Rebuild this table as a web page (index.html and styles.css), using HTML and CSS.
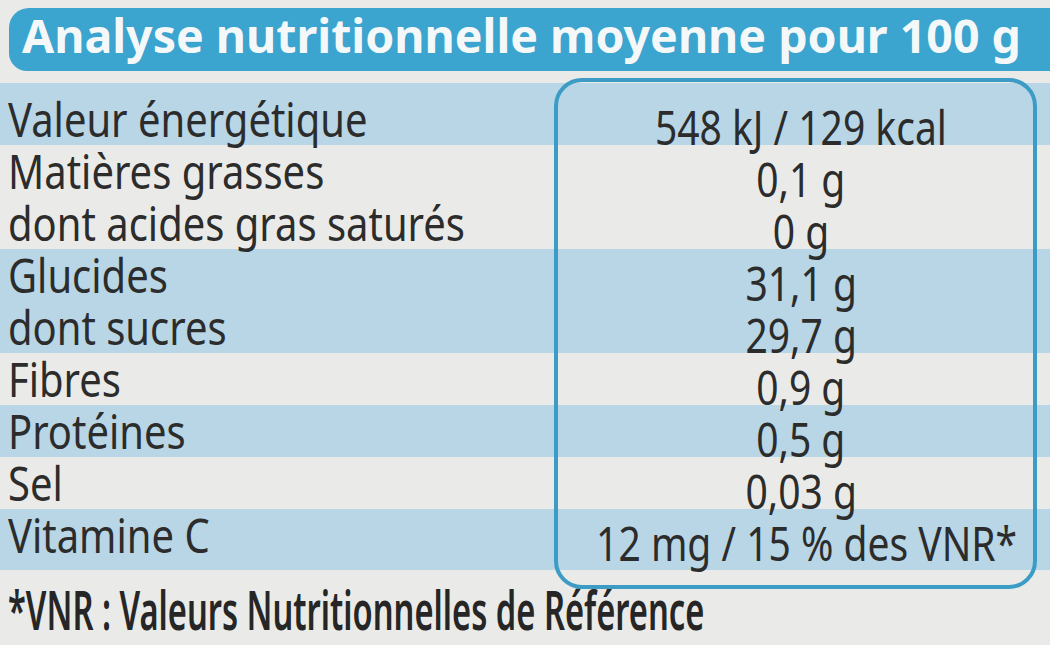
FILE: index.html
```html
<!DOCTYPE html>
<html lang="fr">
<head>
<meta charset="utf-8">
<title>Analyse nutritionnelle</title>
<link rel="stylesheet" href="styles.css">
</head>
<body>
<main class="label">
  <div class="banner">
    <h1 class="banner-title">Analyse nutritionnelle moyenne pour 100 g</h1>
  </div>
  <section class="table">
    <div class="rows">
      <div class="row row-blue row-first"><span class="name"><span class="txt">Valeur énergétique</span></span><span class="value"><span class="txt">548 kJ / 129 kcal</span></span></div>
      <div class="row"><span class="name"><span class="txt">Matières grasses</span></span><span class="value"><span class="txt">0,1 g</span></span></div>
      <div class="row"><span class="name"><span class="txt">dont acides gras saturés</span></span><span class="value"><span class="txt">0 g</span></span></div>
      <div class="row row-blue"><span class="name"><span class="txt">Glucides</span></span><span class="value"><span class="txt">31,1 g</span></span></div>
      <div class="row row-blue"><span class="name"><span class="txt">dont sucres</span></span><span class="value"><span class="txt">29,7 g</span></span></div>
      <div class="row"><span class="name"><span class="txt">Fibres</span></span><span class="value"><span class="txt">0,9 g</span></span></div>
      <div class="row row-blue"><span class="name"><span class="txt">Protéines</span></span><span class="value"><span class="txt">0,5 g</span></span></div>
      <div class="row"><span class="name"><span class="txt">Sel</span></span><span class="value"><span class="txt">0,03 g</span></span></div>
      <div class="row row-blue row-last"><span class="name"><span class="txt">Vitamine C</span></span><span class="value value-wide"><span class="txt">12 mg / 15 % des VNR*</span></span></div>
    </div>
    <div class="value-box"></div>
  </section>
  <p class="note"><span class="note-txt">*VNR : Valeurs Nutritionnelles de Référence</span></p>
</main>
</body>
</html>
```
FILE: styles.css
```css
html, body {
  margin: 0;
  padding: 0;
}
body {
  width: 1050px;
  height: 645px;
  overflow: hidden;
  background: #eaebe8;
  color: #2c2c2c;
  font-family: "Noto Sans", "Open Sans", "Liberation Sans", sans-serif;
}
.label {
  display: flex;
  flex-direction: column;
  width: 1050px;
}
.banner {
  margin: 8px 0 0 9px;
  height: 63px;
  background: #3ba4cf;
  border-radius: 20px 0 0 18px;
  padding: 0 0 0 13px;
  box-sizing: border-box;
}
.banner-title {
  margin: 0;
  font-size: 46.5px;
  line-height: 46px;
  padding-top: 4px;
  font-weight: 700;
  color: #f5f8f9;
  white-space: nowrap;
}
.table {
  display: grid;
  grid-template-columns: 1fr;
}
.rows, .value-box {
  grid-area: 1 / 1;
}
.rows {
  margin-top: 12px;
  display: flex;
  flex-direction: column;
  align-self: start;
}
.row {
  display: flex;
  height: 52px;
  font-size: 47px;
  line-height: 52px;
  white-space: nowrap;
}
.row-blue {
  background: #b8d6e6;
}
.row-first {
  height: 62px;
  padding-top: 10px;
  box-sizing: border-box;
}
.row-last {
  height: 61px;
}
.name {
  width: 553px;
  padding-left: 8px;
  box-sizing: border-box;
}
.name .txt {
  display: inline-block;
  transform: scaleX(0.85);
  transform-origin: left center;
}
.value {
  width: 484px;
  padding: 8px 0 0 12px;
  box-sizing: border-box;
  text-align: center;
}
.value-wide {
  padding-left: 0;
}
.value .txt {
  display: inline-block;
  transform: scaleX(0.83);
  transform-origin: center center;
}
.value-box {
  align-self: start;
  margin: 7px 0 0 554px;
  width: 483px;
  height: 511px;
  border: 4px solid #3c9cc6;
  border-radius: 28px;
  box-sizing: border-box;
  z-index: 1;
}
.note {
  margin: 5px 0 0;
  padding-left: 8px;
  font-size: 32.7px;
  line-height: 48px;
  font-weight: 600;
  color: #262626;
  white-space: nowrap;
}
.note-txt {
  display: inline-block;
  transform: scaleY(1.68);
  transform-origin: 0 36.7px;
}
```
